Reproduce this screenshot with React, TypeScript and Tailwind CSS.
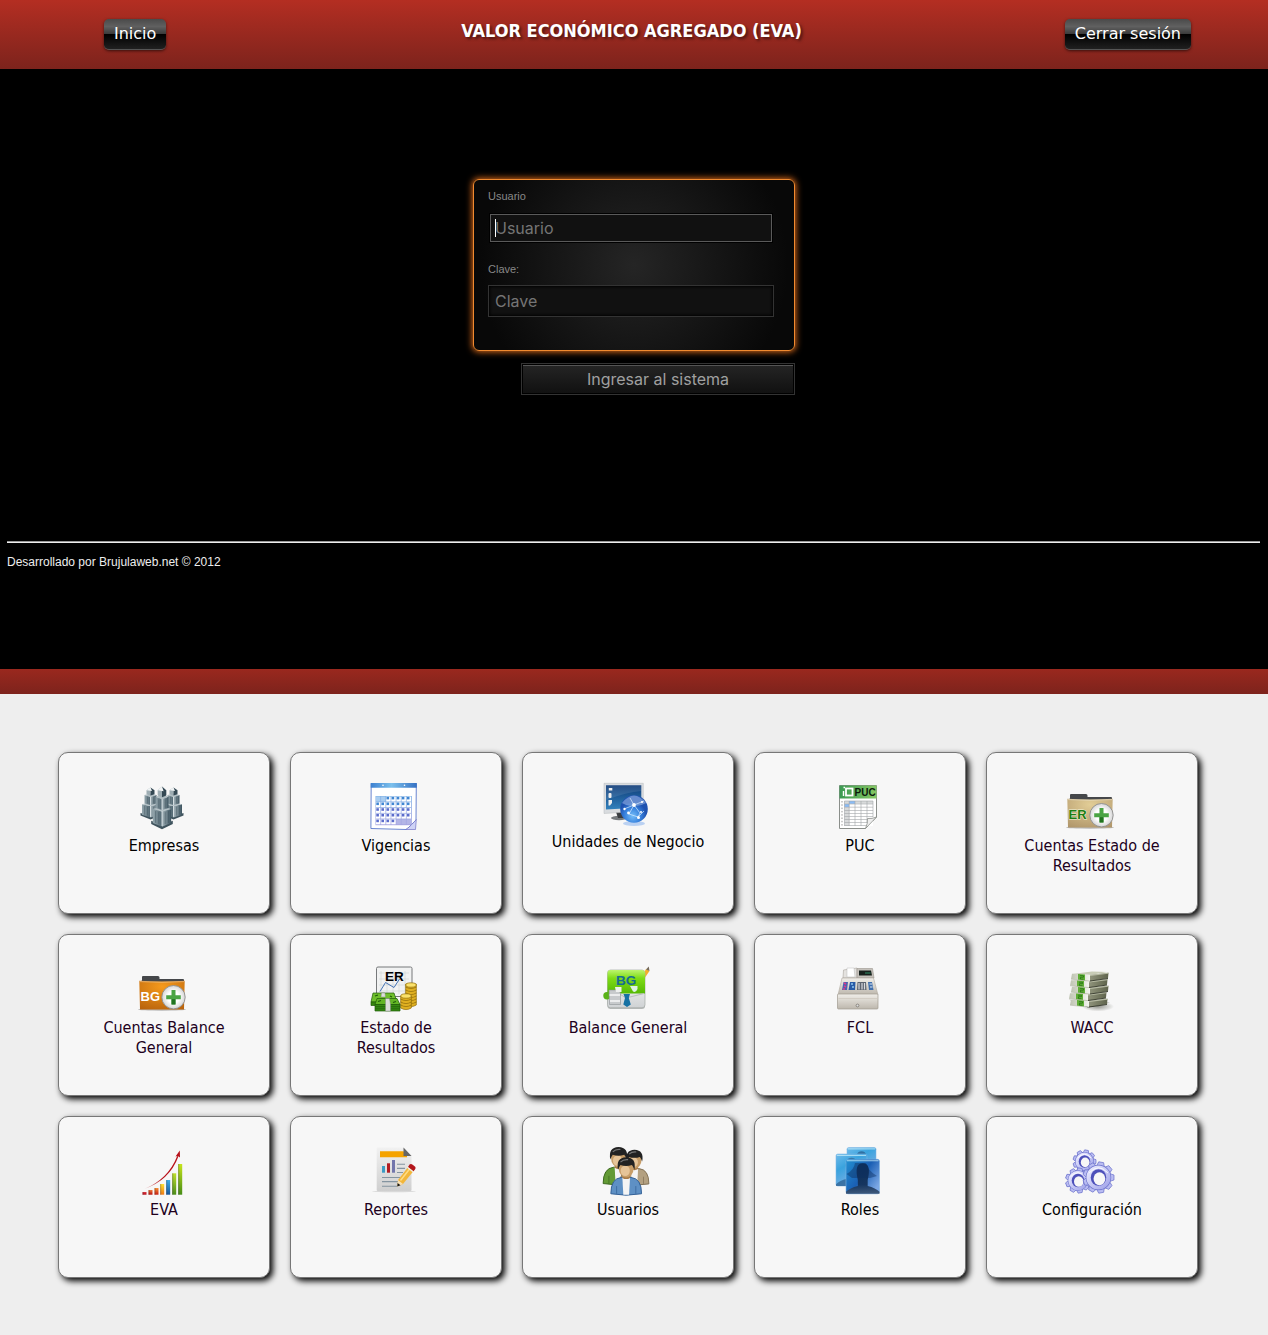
import type { ReactNode } from "react";

function Svg({ children, h = 48 }: { children: ReactNode; h?: number }) {
  return (
    <svg width="48" height={h} viewBox={`0 0 48 ${h}`} aria-hidden="true" className="mr-1 block shrink-0 overflow-visible">
      {children}
    </svg>
  );
}

function Tower() {
  return (
    <g>
      <path d="M-10 32 L0 36 L10 32 L10 35 L0 40 L-10 35Z" fill="#3f535d" />
      <path d="M-8.500 21 L0 23 L0 37.500 L-8.500 34Z" fill="url(#towerL)" />
      <path d="M8.500 21 L0 23 L0 37.500 L8.500 34Z" fill="url(#towerR)" />
      <path d="M-8.500 21 L0 18.500 L8.500 21 L0 23.500Z" fill="#b5c2c7" />
      <path d="M-6 9.500 L0 11.500 V22 L-6 20Z" fill="url(#towerL)" />
      <path d="M6 9.500 L0 11.500 V22 L6 20Z" fill="url(#towerR)" />
      <path d="M-6 9.500 L0 7.500 L6 9.500 L0 11.800Z" fill="#aebcc1" />
      <path d="M-4 3.500 L0 0 V10 L-4 8.500Z" fill="#9eadb3" />
      <path d="M4 3.500 L0 0 V10 L4 8.500Z" fill="#344954" />
      <path d="M-4 3.500 L0 0 L1.500 4.500Z" fill="#f2f5f6" />
      <path d="M0 23 V37 M0 11.500 V22" stroke="#e9f0f2" strokeWidth=".8" />
      <path d="M-6 23 V34 M-3 24 V35 M3 24 V35 M6 23 V34 M-3 12 V20 M3 12 V20" stroke="#2e444f" strokeWidth=".6" opacity=".55" />
    </g>
  );
}

function CompaniesIcon() {
  return (
    <Svg>
      <defs>
        <linearGradient id="towerL"><stop offset="0" stopColor="#93a5ac" /><stop offset="1" stopColor="#4f6570" /></linearGradient>
        <linearGradient id="towerR"><stop offset="0" stopColor="#a5b4ba" /><stop offset="1" stopColor="#3c535f" /></linearGradient>
      </defs>
      <g transform="translate(12.500 4.500) scale(1 .8)"><Tower /></g>
      <g transform="translate(35.500 4.500) scale(1 .8)"><Tower /></g>
      <g transform="translate(24 3.500) scale(1.080 1.070)"><Tower /></g>
    </Svg>
  );
}

function CalendarIcon() {
  const cells: ReactNode[] = [];
  for (let r = 0; r < 5; r++) {
    for (let c = 0; c < 7; c++) {
      const off = (r === 0 && c < 2) || (r === 4 && c > 3);
      cells.push(
        <g key={`${r}-${c}`}>
          <rect x={6 + c * 5.1} y={13.5 + r * 5.7} width="4.400" height="5" fill={off ? (r === 0 ? "#a9cdf0" : "#b3b5e6") : "#fff"} />
          {!off && <rect x={6.3 + c * 5.1} y={13.8 + r * 5.7} width="2.600" height="2.600" fill={r < 2 ? "#3f86d2" : "#5b6ccc"} />}
        </g>,
      );
    }
  }
  return (
    <Svg>
      <defs>
        <linearGradient id="calTop"><stop offset="0" stopColor="#3c80d0" /><stop offset=".45" stopColor="#7cc0ec" /><stop offset="1" stopColor="#3571c3" /></linearGradient>
        <linearGradient id="calGrid" x2="0" y2="1"><stop offset="0" stopColor="#7fb1e6" /><stop offset="1" stopColor="#a6a4e0" /></linearGradient>
      </defs>
      <path d="M1.200.500 H46.300 L46 37 L36.500 46.500 L.900 45.500Z" fill="#fff" stroke="#5a78cc" strokeWidth=".9" />
      <path d="M.700 0 H46.800 V4.800 H.700Z" fill="url(#calTop)" />
      <circle cx="13" cy="2.200" r=".8" fill="#fff" /><circle cx="34.500" cy="2.200" r=".8" fill="#fff" />
      <rect x="5.500" y="13" width="36.300" height="29.200" fill="url(#calGrid)" />
      {cells}
      <path d="M46.300 36.500 L45.500 46.500 H35.500 Q40 44 41.500 41.500 Q44 39.500 46.300 36.500Z" fill="#cfd3f6" stroke="#7173c6" strokeWidth=".7" />
    </Svg>
  );
}

function UnitsIcon() {
  return (
    <Svg h={44}>
      <defs>
        <linearGradient id="scr" x2="0" y2="1"><stop offset="0" stopColor="#0d3a77" /><stop offset="1" stopColor="#3282bd" /></linearGradient>
        <radialGradient id="globe" cx=".45" cy=".75"><stop offset="0" stopColor="#74bdf8" /><stop offset=".6" stopColor="#3680dc" /><stop offset="1" stopColor="#1f52b0" /></radialGradient>
      </defs>
      <ellipse cx="17" cy="35" rx="8" ry="2.200" fill="#777b7e" />
      <path d="M14 29 H23 L25 35 H16Z" fill="#3a3d40" />
      <path d="M2 .300 H41.300 V28 L2 30.500Z" fill="#d9dcdf" stroke="#b6babd" strokeWidth=".5" />
      <path d="M4 2.200 H39.300 V24.500 L4 26.500Z" fill="url(#scr)" />
      <path d="M4 2.200 H39.300 V8 Q25 9 4 17Z" fill="#fff" opacity=".1" />
      <rect x="6.800" y="5" width="3.500" height="2.500" fill="#eee" /><rect x="6.500" y="10" width="3" height="5" rx="1" fill="#eee" /><path d="M6.500 17 H10 V20 L8 22.500 H6.500Z" fill="#eee" />
      <ellipse cx="32" cy="40.500" rx="11" ry="2.500" fill="#9abdf0" opacity=".65" />
      <circle cx="32" cy="26" r="13.800" fill="url(#globe)" />
      <path d="M20 20 Q32 5 44 20 Q37 24 32 22 Q26 24 20 20Z" fill="#d8e9ff" opacity=".38" />
      <path d="M22 26 L32 22 L42 18 M32 22 L27 31 L36 34 L42 28 M32 22 L28 15 M32 22 L38 30 L36 34" stroke="#d9ecff" strokeWidth=".7" fill="none" />
      <g fill="#fff"><circle cx="32" cy="22" r="1.900" /><circle cx="22.500" cy="26" r="1.200" /><circle cx="26.500" cy="30" r="1.400" /><circle cx="36.500" cy="34.500" r="1.500" /><circle cx="40" cy="19" r="1.100" /><circle cx="39" cy="29" r="1" /></g>
    </Svg>
  );
}

function PucIcon() {
  return (
    <Svg>
      <defs><linearGradient id="pucH"><stop offset="0" stopColor="#3b9a52" /><stop offset="1" stopColor="#86c864" /></linearGradient></defs>
      <path d="M5.500 2.500 H42.500 V34 L31.500 45.500 H5.500Z" fill="#fff" stroke="#8b8f8b" />
      <path d="M5.500 2.500 H42.500 V15.500 H5.500Z" fill="url(#pucH)" />
      <rect x="12" y="5.500" width="6.500" height="7" fill="none" stroke="#fff" strokeWidth="1.800" />
      <path d="M9.500 4.500 H11 M9.500 8 V13" stroke="#fff" strokeWidth="1.400" />
      <text x="20.500" y="13.200" fontSize="10" fontWeight="700" fontFamily="Liberation Sans, sans-serif" fill="#0c1a0c">PUC</text>
      <path d="M8 18 V44" stroke="#999" strokeWidth="1" strokeDasharray="1.500 1.800" />
      <rect x="10.500" y="18" width="28.500" height="25" fill="#fff" />
      <rect x="10.500" y="18" width="4.700" height="25" fill="#d8dadb" /><rect x="10.500" y="18" width="28.500" height="2.800" fill="#d8dadb" />
      <rect x="15" y="18" width="6" height="2.800" fill="#8bbcf6" /><rect x="10.500" y="21" width="4.700" height="3" fill="#8bbcf6" />
      <path d="M10.500 18 H39 M10.500 21 H39 M10.500 24.200 H39 M10.500 27.500 H39 M10.500 30.500 H39 M10.500 33.500 H39 M10.500 36.500 H36 M10.500 39.500 H34 M10.500 42.500 H32 M10.500 18 V43 M15.200 18 V43 M21 18 V43 M27 18 V43 M33 18 V40 M39 18 V34" stroke="#a3a6a9" strokeWidth=".6" />
      <path d="M42.500 34 L31.500 45.500 Q34 40 33.500 35.500 Q38 36 42.500 34Z" fill="#eee" stroke="#8b8f8b" strokeWidth=".8" />
    </Svg>
  );
}

function FolderIcon({ text, orange }: { text: string; orange?: boolean }) {
  const id = orange ? "fOrange" : "fTan";
  return (
    <Svg>
      <defs>
        <radialGradient id={id} cx=".5" cy=".2" r=".9"><stop offset="0" stopColor={orange ? "#f59a1c" : "#e2cd96"} /><stop offset="1" stopColor={orange ? "#b8620c" : "#b0966a"} /></radialGradient>
        <radialGradient id={`${id}c`}><stop offset=".5" stopColor="#fff" /><stop offset="1" stopColor="#d5d5d5" /></radialGradient>
      </defs>
      <ellipse cx="24" cy="44.500" rx="24" ry="1.200" fill="#777" opacity=".5" />
      <path d="M4 17 V12 Q4 11 5 11 H20 Q21.500 11 21.500 12.500 V14 H45 Q46 14 46 15 V18 H3 V15Z" fill="#45474a" />
      <path d="M1.300 15.800 Q24 17 46.700 15.800 L46 44.500 H2Z" fill={`url(#${id})`} />
      <path d="M1.800 16.600 Q24 17.800 46.200 16.600" stroke="#fff" strokeOpacity=".45" fill="none" strokeWidth=".8" />
      <text x="2.500" y="36.300" fontSize="13" fontWeight="700" fontFamily="Liberation Sans, sans-serif" fill={orange ? "#fff" : "#1f7d12"} stroke={orange ? "none" : "#f1f3d8"} strokeWidth="1" paintOrder="stroke">{text}</text>
      <circle cx="35.500" cy="32.200" r="11.700" fill={`url(#${id}c)`} stroke="#8c8c8c" strokeWidth=".9" />
      <path d="M33.500 25 h4 v5.200 h5.300 v4 h-5.300 v5.300 h-4 v-5.300 h-5.300 v-4 h5.300Z" fill="#4aa444" />
      <path d="M33.500 34.200 h4 v5.300 h-4Z" fill="#217321" />
    </Svg>
  );
}

function Coins({ x, top, bottom }: { x: number; top: number; bottom: number }) {
  const n = Math.round((bottom - top) / 3);
  return (
    <g stroke="#8f6d0a" strokeWidth=".7">
      {Array.from({ length: n }, (_, i) => (
        <path key={i} d={`M${x - 5.3} ${bottom - i * 3} v-3 h10.600 v3 q-5.300 3.200 -10.600 0Z`} fill="#e0b021" />
      ))}
      <ellipse cx={x} cy={top} rx="5.300" ry="2.200" fill="#fbe16a" />
    </g>
  );
}

function StatementIcon() {
  return (
    <Svg>
      <rect x="6.500" y="2" width="35.500" height="29.500" rx="1.500" fill="#f1f2f2" stroke="#77797b" />
      <path d="M11 6 V29 M17 6 V29 M23 6 V29 M29 6 V29 M35 6 V29 M9 8 H39 M9 14 H39 M9 20 H39 M9 26 H39" stroke="#cfd3d4" strokeWidth=".6" />
      <path d="M10 26.500 L15.500 17.500 L24 22.500 L29.500 14" fill="none" stroke="#4472b4" strokeWidth="1" />
      <text x="15" y="15.800" fontSize="13.500" fontWeight="700" fontFamily="Liberation Sans, sans-serif" fill="#000">ER</text>
      <Coins x={41} top={20} bottom={40} />
      <Coins x={36} top={31} bottom={43} />
      <g stroke="#205c08" strokeWidth=".7">
        <path d="M3 28 H24 L27 37 H1Z" fill="#6fbf2c" /><path d="M1 37 H27 V40.500 H1Z" fill="#36860f" />
        <path d="M7 33.500 H27 L30 39.500 H5Z" fill="#63b625" /><path d="M5 39.500 H30 V46 H5Z" fill="#358a12" />
        <path d="M5 41.700 H30 M5 43.800 H30" fill="none" />
      </g>
      <path d="M11.500 28 H15 L15.500 32 H11Z M15.500 33.500 H19.500 L20.500 39.500 V46 H15.500Z" fill="#dcdedb" stroke="#7b7e79" strokeWidth=".4" />
      <path d="M8 36.500 l3 -1 M23 37.500 l3 -1 M5 31 l3 -1 M20 31 l2 1" stroke="#1d5909" strokeWidth="1.200" />
    </Svg>
  );
}

function BalanceIcon() {
  return (
    <Svg>
      <defs>
        <linearGradient id="balG" x2="0" y2="1"><stop offset="0" stopColor="#bdf56f" /><stop offset=".35" stopColor="#7fdc16" /><stop offset="1" stopColor="#55b904" /></linearGradient>
        <linearGradient id="balW" x2="0" y2="1"><stop offset="0" stopColor="#fff" /><stop offset="1" stopColor="#cfd2d4" /></linearGradient>
      </defs>
      <path d="M39.500 13 L44 4 L47.500 6 L42 14Z" fill="#f5b02a" /><path d="M44 4.500 L46.800 1.500 L47.500 6Z" fill="#756a5c" />
      <rect x="5.500" y="6" width="37.500" height="38" rx="3" fill="#b8bbbb" />
      <rect x="5.500" y="5" width="37.500" height="37.800" rx="3" fill="url(#balW)" stroke="#a4a9a5" strokeWidth=".7" />
      <path d="M5.500 28.500 V8 Q5.500 5 8.500 5 H40 Q43 5 43 8 V28.500Z" fill="url(#balG)" />
      <text x="14" y="19.800" fontSize="13.500" fontWeight="700" fontFamily="Liberation Sans, sans-serif" fill="#166b93">BG</text>
      <path d="M28 21 H35.500 V24 Q34 28 31 26.500Z" fill="#dff2e6" />
      <path d="M17 28.500 L24 33 L42 28.500" fill="none" stroke="#b9bdbf" />
      <path d="M21.500 29 H28 L26.800 33 L28.800 39.500 L25 42 L21.300 39.500 L23 33Z" fill="#1671a3" />
      <circle cx="5" cy="30.800" r="3.700" fill="#5ab318" />
      <path d="M7 25 H16 L18.500 28 V39.500 H7.500Z" fill="#c7cacc" stroke="#8d9295" strokeWidth=".6" /><path d="M7.500 30 H18 M8 36 H18" stroke="#f8f8f8" strokeWidth="1.500" />
      <path d="M13 22 H19.500 V27 H14Z" fill="#eef0ef" />
    </Svg>
  );
}

function RegisterIcon() {
  return (
    <Svg>
      <defs><linearGradient id="reg" x2="0" y2="1"><stop offset="0" stopColor="#f0eee9" /><stop offset="1" stopColor="#bdb7ad" /></linearGradient></defs>
      <path d="M9.500 5 L23 3 L23 13 H9Z" fill="#e4e2df" stroke="#aaa59e" strokeWidth=".6" />
      <path d="M13 3 h7 l1 9 h-8Z" fill="#fff" stroke="#bbb" strokeWidth=".5" />
      <path d="M23 3.500 H38.500 L40 13 H23Z" fill="#c5c1bb" stroke="#9a958d" strokeWidth=".6" /><path d="M25 5.500 H37 L38 10.500 H25Z" fill="#17201c" /><path d="M31 8 H36.500" stroke="#2f8d64" />
      <path d="M8 13 H39.500 L44 30 H4Z" fill="url(#reg)" stroke="#b0aaa0" strokeWidth=".6" />
      <path d="M9.500 17 H14 L13 25 H8Z" fill="#4a63b0" /><path d="M16 17 H21.500 L21 25 H14.500Z" fill="#285ba7" />
      <path d="M10 18 l2 1 M10 21 l2 1 M9 24 l2 0" stroke="#e0388b" strokeWidth="1.500" /><path d="M17 19 h2 M18 22 h2" stroke="#8ec5ee" strokeWidth="1.300" />
      <path d="M23.500 17 H32 L32.500 25 H23Z" fill="#5d6470" /><path d="M25 18 V24.500 M28 18 V24.500 M30.500 18 V24.500" stroke="#d9dbdf" strokeWidth="1.200" />
      <path d="M34 17 H38 L39.500 25 H35Z" fill="#416fad" /><path d="M35.500 19 h2.500 M36 22 h2.500" stroke="#dce9f7" strokeWidth="1.200" />
      <rect x="3.500" y="29" width="40.500" height="15" rx="1" fill="url(#reg)" stroke="#a19b91" strokeWidth=".7" />
      <path d="M4.500 33.500 H43" stroke="#c9c3b9" strokeWidth=".6" /><circle cx="23.500" cy="40.500" r="1.400" fill="#ddd" stroke="#706b63" strokeWidth=".7" />
    </Svg>
  );
}

function MoneyIcon() {
  return (
    <Svg>
      <defs>
        <linearGradient id="monF"><stop offset="0" stopColor="#bfc4b2" /><stop offset="1" stopColor="#f3f4ee" /></linearGradient>
        <linearGradient id="monS"><stop offset="0" stopColor="#8f937b" /><stop offset="1" stopColor="#5f644c" /></linearGradient>
        <radialGradient id="monSh"><stop offset="0" stopColor="#55584c" stopOpacity=".6" /><stop offset="1" stopColor="#55584c" stopOpacity="0" /></radialGradient>
      </defs>
      <ellipse cx="32" cy="41.500" rx="16" ry="5" fill="url(#monSh)" />
      <path d="M3 34.500 L22 40 L44 37.500 L22 42.500Z" fill="#2f3328" />
      {[4, 3, 2, 1, 0].map((i) => (
        <g key={i} transform={`translate(${[1, 0, 1, -1, 0][i]} ${7.5 + i * 6.5})`}>
          <path d="M5 1.500 L25 -1 L41 -.500 L23 2.500Z" fill="#c8ccb6" />
          <path d="M5 1.300 L23 2.300 V8.500 L4 6.500Z" fill="url(#monF)" />
          <path d="M11 1.600 L18 2 V8 L11 7.200Z" fill="#5fae35" />
          <path d="M13 3.200 h3.500 v1.500 h-3 v2 h3" stroke="#2d7a16" strokeWidth=".9" fill="none" />
          <path d="M23 2.500 L41.500 .200 L41 5.800 L23 8.500Z" fill="url(#monS)" />
          <path d="M23 3 L41.500 .700" stroke="#c0c4ab" strokeWidth=".9" />
          <path d="M23 8.500 L41 6" stroke="#34382a" strokeWidth=".9" />
          <path d="M4 6.700 L23 8.600" stroke="#a6ab99" strokeWidth=".5" />
        </g>
      ))}
    </Svg>
  );
}

const BARS = [
  { x: 4.5, y: 45, top: "#e23b46", bottom: "#b30d18" },
  { x: 10.5, y: 43, top: "#f27a3a", bottom: "#b90f0f" },
  { x: 16.5, y: 41, top: "#f89336", bottom: "#c81b10" },
  { x: 22.2, y: 37, top: "#ffe030", bottom: "#ee7a17" },
  { x: 28.2, y: 33, top: "#3dadec", bottom: "#14569e" },
  { x: 34.2, y: 26.3, top: "#bfe02c", bottom: "#4a8c18" },
  { x: 40.2, y: 17, top: "#c6e51c", bottom: "#468c16" },
];

function GrowthIcon() {
  return (
    <Svg>
      <defs><linearGradient id="arrow"><stop offset="0" stopColor="#b8121b" stopOpacity=".1" /><stop offset=".5" stopColor="#b8121b" /></linearGradient></defs>
      {BARS.map((b, i) => (
        <g key={i}>
          <defs><linearGradient id={`gr${i}`} x2="0" y2="1"><stop offset="0" stopColor={b.top} /><stop offset="1" stopColor={b.bottom} /></linearGradient></defs>
          <rect x={b.x} y={b.y} width="4" height={47.7 - b.y} fill={`url(#gr${i})`} />
          <rect x={b.x} y={b.y} width="1" height={47.7 - b.y} fill="#333" opacity=".35" />
        </g>
      ))}
      <path d="M6 42 Q30 32.500 39.200 9 L40.400 9.500 Q31.500 33.500 6 42Z" fill="url(#arrow)" />
      <path d="M41.800 3.500 L42 10.500 L39.800 9 L37.500 9.500Z" fill="#b8121b" />
    </Svg>
  );
}

function ReportIcon() {
  return (
    <Svg>
      <defs><linearGradient id="rep" x2="0" y2="1"><stop offset="0" stopColor="#f1f1f1" /><stop offset="1" stopColor="#cfcfcf" /></linearGradient></defs>
      <ellipse cx="24" cy="44.500" rx="22" ry=".8" fill="#bbb" opacity=".5" />
      <path d="M7.500.500 H33.500 L41.500 9 V43 Q41.500 44 40.500 44 H7.500 Q6.700 44 6.700 43 V1.500 Q6.700.500 7.500.500Z" fill="url(#rep)" />
      <path d="M10 4.200 H33.500 L37 8.500 V10.300 H10Z" fill="#f5a300" /><path d="M33.500.500 L41.500 9 H33.500Z" fill="#666" />
      <rect x="12" y="19" width="3" height="6.700" fill="#3c9cc5" /><rect x="17" y="16.300" width="3" height="9.400" fill="#b21c22" /><rect x="22" y="13" width="3" height="12.700" fill="#7276ac" />
      <path d="M27 17.200 H35 M27 21.400 H35 M27 25.500 H33 M12 30.500 H30 M12 34.600 H29 M12 39.300 H27" stroke="#8494a0" strokeWidth="1.100" />
      <path d="M27.300 39.500 L28 33 L38.500 19.500 L44 23.500 L33 37Z" fill="#f2b63a" /><path d="M30.500 33.500 L40 21.500" stroke="#ffdc84" strokeWidth="1.500" />
      <path d="M27.300 39.500 L28 33 L33 37Z" fill="#f7dfb3" /><path d="M27.300 39.500 L27.600 36 L30.500 38.200Z" fill="#151515" />
      <path d="M38 20 L39.500 17.500 Q41 16.300 43 18 L45.200 19.800 Q46.200 21 45 22.500 L43.500 24.300Z" fill="#b3161c" /><path d="M37.300 20.300 L43 24.800" stroke="#eee" strokeWidth="1.200" />
    </Svg>
  );
}

function Person({ x, y, s, c1, c2 }: { x: number; y: number; s: number; c1: string; c2: string }) {
  return (
    <g transform={`translate(${x} ${y}) scale(${s})`}>
      <path d="M-16 36 Q-16 20 -5 19 H5 Q16 20 16 36 Q0 39 -16 36Z" fill={c1} stroke={c2} strokeWidth="1" />
      <path d="M-4 19 H4 L3 37 H-3Z" fill="#f4f4f4" /><path d="M-10 28 V36 M10 28 V36" stroke={c2} strokeWidth="1" opacity=".7" />
      <path d="M-4 14 H4 V19.500 Q0 22 -4 19.500Z" fill="#a97c4a" />
      <ellipse cx="0" cy="9.500" rx="7.800" ry="9.500" fill="#c79d68" /><ellipse cx="-1" cy="12" rx="4.800" ry="5.500" fill="#e6c498" />
      <path d="M-8.500 11 Q-11 -1.500 0 -2 Q11 -1.500 8.500 11 Q7.500 8 6 6 Q0 8 -6 6 Q-7.500 8 -8.500 11Z" fill="#222" />
      <path d="M-6 3 Q-3 0 2 .500" stroke="#777" strokeWidth="1.200" fill="none" />
    </g>
  );
}

function UsersIcon() {
  return (
    <Svg>
      <Person x={16.5} y={2} s={0.96} c1="#639a35" c2="#39651d" />
      <Person x={32.5} y={4.5} s={0.9} c1="#b3a080" c2="#7d6c50" />
      <Person x={24.2} y={12.2} s={0.96} c1="#5e90c4" c2="#315e94" />
    </Svg>
  );
}

function Silhouette({ x, y, w, h, dark }: { x: number; y: number; w: number; h: number; dark?: boolean }) {
  return (
    <g transform={`translate(${x} ${y}) scale(${w / 34} ${h / 35})`}>
      <rect width="34" height="35" rx="2" fill={dark ? "url(#roleD)" : "url(#roleL)"} stroke="#7db4e4" strokeWidth=".6" />
      <path d="M0 33 Q4 29 12 27 V21 Q8 4 17 4 Q26 4 22 21 V27 Q30 29 34 33 V35 H0Z" fill={dark ? "url(#figD)" : "#285b8c"} opacity={dark ? 0.95 : 0.7} />
      <path d="M1 1.500 H33" stroke="#c8eefb" strokeWidth="1.200" opacity=".8" />
    </g>
  );
}

function RolesIcon() {
  return (
    <Svg>
      <defs>
        <linearGradient id="roleL" x2=".6" y2="1"><stop offset="0" stopColor="#6fbbea" /><stop offset=".4" stopColor="#3aa3de" /><stop offset="1" stopColor="#86b2e6" /></linearGradient>
        <linearGradient id="roleD" x2="1" y2=".7"><stop offset="0" stopColor="#2391d2" /><stop offset=".55" stopColor="#1a5fb4" /><stop offset="1" stopColor="#7ba7e4" /></linearGradient>
        <linearGradient id="figD" x2="0" y2="1"><stop offset="0" stopColor="#0c2c55" /><stop offset=".7" stopColor="#14325a" /><stop offset="1" stopColor="#3d5676" /></linearGradient>
      </defs>
      <Silhouette x={13} y={0.5} w={29} h={32} />
      <Silhouette x={2} y={7} w={31} h={32} />
      <Silhouette x={12} y={12.3} w={33.5} h={34.5} dark />
      <path d="M12.500 27 Q20 23 21 16 H32 Q34 24 43 29 L36 31 H18Z" fill="#0e2f60" opacity=".45" />
    </Svg>
  );
}

function Gear({ x, y, r }: { x: number; y: number; r: number }) {
  return (
    <g transform={`translate(${x} ${y})`}>
      {[0, 40, 80, 120, 160, 200, 240, 280, 320].map((a) => (
        <path key={a} transform={`rotate(${a + 10})`} d={`M${-r * 0.16} ${-r} H${r * 0.16} L${r * 0.26} ${-r * 0.7} H${-r * 0.26}Z`} fill="#b9bcf2" stroke="#6a70cb" strokeWidth=".7" />
      ))}
      <circle r={r * 0.62} fill="none" stroke="#6a70cb" strokeWidth={r * 0.4} />
      <circle r={r * 0.62} fill="none" stroke="url(#gearG)" strokeWidth={r * 0.32} />
      <ellipse rx={r * 0.5} ry={r * 0.54} fill="#4d50ba" />
      <ellipse cx={r * 0.06} cy={r * 0.08} rx={r * 0.38} ry={r * 0.42} fill="#f7f7f7" />
      <path d={`M${-r * 0.6} ${-r * 0.3} Q0 ${-r * 0.95} ${r * 0.6} ${-r * 0.3}`} stroke="#fbfbff" strokeWidth="1" fill="none" />
    </g>
  );
}

function SettingsIcon() {
  return (
    <Svg>
      <defs><linearGradient id="gearG" x2="1" y2="1"><stop offset="0" stopColor="#e9eaff" /><stop offset="1" stopColor="#a3a6ea" /></linearGradient></defs>
      <Gear x={18.5} y={14.5} r={11.5} />
      <Gear x={12} y={33.5} r={12.5} />
      <Gear x={32.5} y={30.5} r={15.5} />
    </Svg>
  );
}

type Item = { lines: string[]; icon: ReactNode; visited?: boolean };

const ITEMS: Item[] = [
  { lines: ["Empresas"], icon: <CompaniesIcon /> },
  { lines: ["Vigencias"], icon: <CalendarIcon /> },
  { lines: ["Unidades de Negocio"], icon: <UnitsIcon /> },
  { lines: ["PUC"], icon: <PucIcon /> },
  { lines: ["Cuentas Estado de", "Resultados"], icon: <FolderIcon text="ER" />, visited: true },
  { lines: ["Cuentas Balance", "General"], icon: <FolderIcon text="BG" orange />, visited: true },
  { lines: ["Estado de", "Resultados"], icon: <StatementIcon />, visited: true },
  { lines: ["Balance General"], icon: <BalanceIcon />, visited: true },
  { lines: ["FCL"], icon: <RegisterIcon />, visited: true },
  { lines: ["WACC"], icon: <MoneyIcon />, visited: true },
  { lines: ["EVA"], icon: <GrowthIcon />, visited: true },
  { lines: ["Reportes"], icon: <ReportIcon />, visited: true },
  { lines: ["Usuarios"], icon: <UsersIcon /> },
  { lines: ["Roles"], icon: <RolesIcon /> },
  { lines: ["Configuración"], icon: <SettingsIcon /> },
];

function HeaderButton({ children }: { children: ReactNode }) {
  return (
    <button
      type="button"
      className="h-[31px] rounded-[5px] border-b border-[#555] bg-[linear-gradient(to_bottom,#4a4a4a_0%,#606060_25%,#3c3c3c_49%,#000_50%,#202020_100%)] px-2.5 font-['DejaVu_Sans',sans-serif] text-base leading-[30px] whitespace-nowrap text-white shadow-[0_1px_3px_rgba(0,0,0,0.6)]"
    >
      {children}
    </button>
  );
}

function Card({ item }: { item: Item }) {
  return (
    <a
      href="#"
      className={`flex min-h-[162px] flex-col items-center rounded-[10px] border border-[#777] bg-[#f7f7f7] pt-[30px] text-center font-['DejaVu_Sans_Condensed','Noto_Sans',sans-serif] text-base leading-5 shadow-[3px_3px_6px_#000] ${item.visited ? "text-[#20001c]" : "text-black"}`}
    >
      {item.icon}
      <span className="mt-[5px] whitespace-nowrap">
        {item.lines.map((l) => (
          <span key={l} className="block">{l}</span>
        ))}
      </span>
    </a>
  );
}

export default function App() {
  return (
    <div className="min-h-screen bg-[#eee] pb-[57px]">
      <header className="grid min-h-[69px] grid-cols-[1fr_auto_1fr] items-start bg-linear-to-b from-[#b42e22] to-[#7d231c] pt-[19px] pr-[5px]">
        <div className="pl-[104px]">
          <HeaderButton>Inicio</HeaderButton>
        </div>
        <h1 className="font-['DejaVu_Sans_Condensed','Noto_Sans',sans-serif] text-lg leading-6 font-bold whitespace-nowrap text-white [text-shadow:2px_2px_3px_rgba(0,0,0,0.5)]">
          VALOR ECONÓMICO AGREGADO (EVA)
        </h1>
        <div className="flex justify-end pr-[72px]">
          <HeaderButton>Cerrar sesión</HeaderButton>
        </div>
      </header>

      <main className="min-h-[600px] bg-black pt-[110px] font-['Liberation_Sans',sans-serif]">
        <form className="mx-auto w-[322px]" onSubmit={(e) => e.preventDefault()}>
          <div className="min-h-[172px] rounded-md border border-[#f08a30] bg-[radial-gradient(circle_at_center,#252525_0%,#080808_85%)] pt-2 pl-3.5 shadow-[0_0_6px_1px_#d8691a]">
            <label htmlFor="usuario" className="block text-[11px] leading-4 text-[#888]">Usuario</label>
            <div className="relative mt-2 w-[286px] p-0.5">
              <input
                id="usuario"
                placeholder="Usuario"
                className="block h-7 w-full border border-[#5a5a5a] bg-[#111] px-1 font-['Inter',sans-serif] text-base text-white ring-1 ring-black outline-none placeholder:text-[#757575]"
              />
              <span className="absolute top-[7px] left-[7px] h-[18px] w-px bg-white" />
            </div>
            <label htmlFor="clave" className="mt-[17px] block text-[11px] leading-4 text-[#888]">Clave:</label>
            <input
              id="clave"
              type="password"
              placeholder="Clave"
              className="mt-2 block h-8 w-[286px] border border-[#333] bg-[#111] px-1.5 font-['Inter',sans-serif] text-base text-white shadow-[inset_0_0_3px_1px_#000] outline-none placeholder:text-[#757575]"
            />
          </div>
          <button
            type="submit"
            className="mt-3 ml-auto block h-8 w-[274px] border border-[#333] bg-black p-px font-['Inter',sans-serif] text-base text-[#a0a0a0]"
          >
            <span className="flex h-full items-center justify-center border-t border-[#555] bg-linear-to-b from-[#242424] to-[#111] pb-0.5">Ingresar al sistema</span>
          </button>
        </form>
        <footer className="mt-[146px] mr-2 ml-[7px]">
          <hr className="h-0.5 border-t border-b border-t-[#999] border-b-[#eee]" />
          <p className="mt-2.5 text-xs leading-[18px] text-[#eee]">Desarrollado por Brujulaweb.net © 2012</p>
        </footer>
      </main>

      <div className="h-[25px] bg-linear-to-b from-[#9a281e] to-[#7d231c]" />

      <nav className="mt-[58px] mr-[70px] ml-[58px] grid grid-cols-5 gap-5">
        {ITEMS.map((item) => (
          <Card key={item.lines.join(" ")} item={item} />
        ))}
      </nav>
    </div>
  );
}
